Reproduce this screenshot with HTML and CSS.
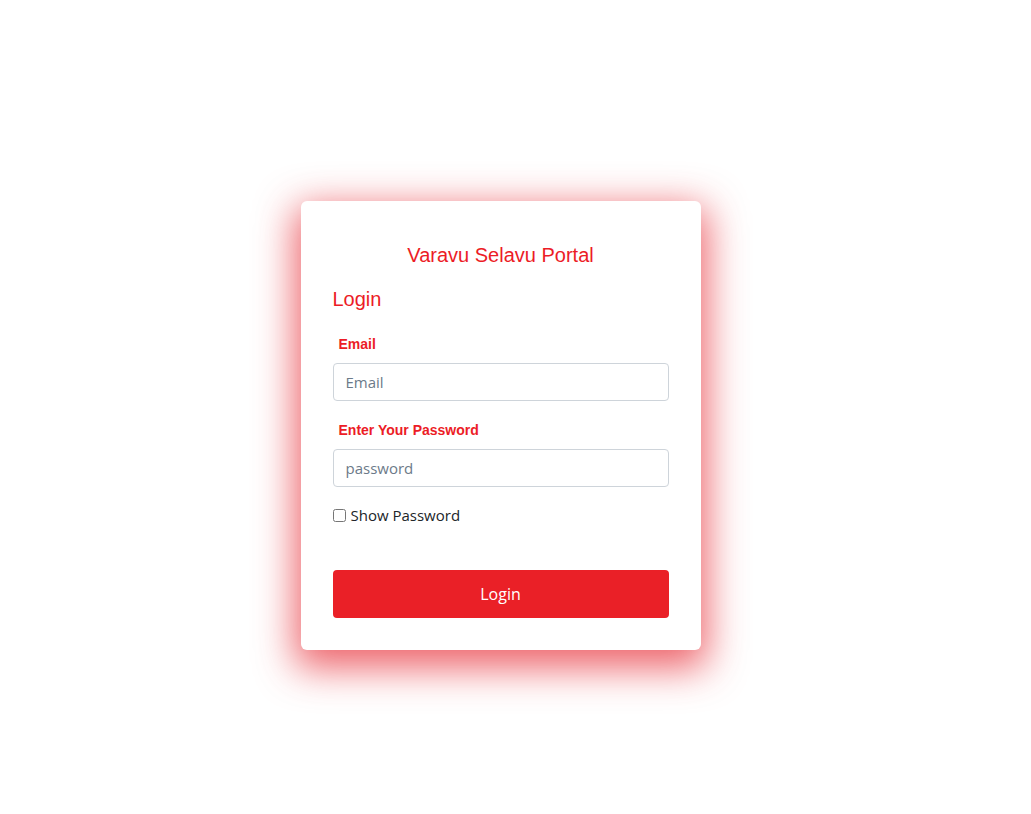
FILE: index.html
```html
<!DOCTYPE html>
<html>
<head>
<meta charset="utf-8">
<title>Varavu Selavu Portal</title>
<link rel="stylesheet" href="styles.css">
</head>
<body>
<main class="page">
  <div class="card">
    <h1 class="brand">Varavu Selavu Portal</h1>
    <h2 class="heading">Login</h2>
    <form class="form">
      <label class="label" for="email">Email</label>
      <input class="input" id="email" type="text" placeholder="Email">
      <label class="label label-gap" for="pw">Enter Your Password</label>
      <input class="input" id="pw" type="password" placeholder="password">
      <label class="check"><input type="checkbox" class="checkbox"> Show Password</label>
      <button type="button" class="btn">Login</button>
    </form>
  </div>
</main>
</body>
</html>
```

FILE: styles.css
```css
html, body {
  margin: 0;
  padding: 0;
  background: #ffffff;
}
.page {
  width: 1031px;
  height: 814px;
  display: flex;
  justify-content: center;
  align-items: flex-start;
  padding: 201px 30px 0 0;
  box-sizing: border-box;
}
.card {
  width: 400px;
  box-sizing: border-box;
  padding: 42px 32px 32px 32px;
  background: #fff;
  border-radius: 6px;
  box-shadow: 0 12px 38px 6px rgba(230, 40, 50, 0.72);
  font-family: "Liberation Sans", Arial, sans-serif;
}
.brand {
  margin: 0;
  font-size: 20px;
  line-height: 24px;
  font-weight: 400;
  color: #ec1c26;
  text-align: center;
}
.heading {
  margin: 20px 0 0 0;
  font-size: 20px;
  line-height: 24px;
  font-weight: 400;
  color: #ec1c26;
}
.form {
  display: flex;
  flex-direction: column;
  margin-top: 25px;
}
.label {
  font-size: 14px;
  line-height: 17px;
  font-weight: 700;
  color: #ec1c26;
  padding-left: 6px;
  margin-bottom: 10px;
}
.label-gap {
  margin-top: 21px;
}
.input {
  height: 38px;
  box-sizing: border-box;
  border: 1px solid #ced4da;
  border-radius: 4px;
  padding: 6px 12px;
  font-family: "Open Sans", "Noto Sans", sans-serif;
  font-size: 15px;
  color: #495057;
  outline: none;
}
.input::placeholder {
  color: #6c7a89;
}
.check {
  margin-top: 16px;
  display: flex;
  align-items: center;
  gap: 5px;
  font-family: "Open Sans", "Noto Sans", sans-serif;
  font-size: 15px;
  line-height: 24px;
  color: #212529;
}
.checkbox {
  margin: 0;
  width: 13px;
  height: 13px;
}
.btn {
  margin-top: 43px;
  height: 48px;
  border: none;
  border-radius: 4px;
  background: #ea2027;
  color: #fff;
  font-family: "Open Sans", "Noto Sans", sans-serif;
  font-size: 16px;
}
```
